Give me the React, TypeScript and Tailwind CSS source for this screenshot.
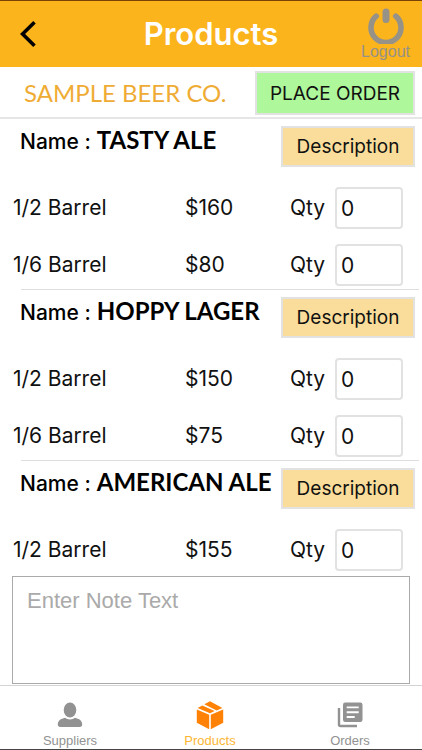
import React, { useState } from "react";

interface Size {
  id: string;
  label: string;
  price: number;
}

interface Product {
  id: string;
  name: string;
  sizes: Size[];
}

const products: Product[] = [
  {
    id: "tasty-ale",
    name: "TASTY ALE",
    sizes: [
      { id: "half", label: "1/2 Barrel", price: 160 },
      { id: "sixth", label: "1/6 Barrel", price: 80 }
    ]
  },
  {
    id: "hoppy-lager",
    name: "HOPPY LAGER",
    sizes: [
      { id: "half", label: "1/2 Barrel", price: 150 },
      { id: "sixth", label: "1/6 Barrel", price: 75 }
    ]
  },
  {
    id: "american-ale",
    name: "AMERICAN ALE",
    sizes: [{ id: "half", label: "1/2 Barrel", price: 155 }]
  }
];

function BackIcon() {
  return (
    <svg viewBox="0 0 16 26" className="w-4 h-[26px]" fill="none" stroke="currentColor" strokeWidth="3.6">
      <path d="M14.5 1.3 2.6 13l11.9 11.7" />
    </svg>
  );
}

function PowerIcon() {
  return (
    <svg viewBox="0 0 36 36" className="size-9" fill="none" stroke="currentColor" strokeLinecap="round">
      <path d="M8.200 8.200a15 15 0 1 0 19.600 0" strokeWidth="5.600" />
      <path d="M18 4v7.600" strokeWidth="7" />
    </svg>
  );
}

function PersonIcon() {
  return (
    <svg viewBox="0 0 26 26" className="size-[26px]" fill="currentColor">
      <ellipse cx="13" cy="8" rx="6.3" ry="7.4" />
      <path d="M.8 22.5c0-3.6 2.8-5.8 7.4-6.7 1.3 1 3 1.6 4.8 1.6s3.5-.6 4.8-1.6c4.6.9 7.4 3.1 7.4 6.7 0 1.5-.9 2.5-2.4 2.5H3.2C1.7 25 .8 24 .8 22.5z" />
    </svg>
  );
}

function BoxIcon() {
  return (
    <svg viewBox="0 0 28 30" className="w-7 h-[30px]" fill="#ff8206">
      <path d="M.8 9.6 13.2 14.8v14.4L.8 22.8z" />
      <path d="M27.2 9.6 14.8 14.8v14.4l12.4-6.4z" />
      <path d="M1.6 7.9 6.3 5.4l12.3 5.7-4.6 2.2z" />
      <path d="M8.3 4.3 14 1.2l12.4 6.7-5.8 2.5z" />
    </svg>
  );
}

function OrdersIcon() {
  return (
    <svg viewBox="0 0 26 26" className="size-[26px]">
      <path d="M2 6v16.500a1.500 1.500 0 0 0 1.500 1.500H20" fill="none" stroke="currentColor" strokeWidth="2.4" />
      <rect x="6" y="0.5" width="19.5" height="19.5" rx="2.2" fill="currentColor" />
      <path d="M9.700 5.400h12M9.700 10.200h12M9.700 15h8" stroke="#fff" strokeWidth="1.9" />
    </svg>
  );
}

const tabs = [
  { id: "suppliers", label: "Suppliers", icon: PersonIcon },
  { id: "products", label: "Products", icon: BoxIcon },
  { id: "orders", label: "Orders", icon: OrdersIcon }
];

export default function App() {
  const [activeTab, setActiveTab] = useState("products");
  const [quantities, setQuantities] = useState<Record<string, string>>({});
  const [note, setNote] = useState("");

  return (
    <div className="flex h-screen flex-col border-b border-[#444] bg-white font-['Inter',sans-serif] text-[#111]">
      {/* Header */}
      <header className="grid h-[67px] shrink-0 grid-cols-[1fr_auto_1fr] items-center border-t border-[#7a4306] bg-[#fcb41d]">
        <button aria-label="Back" className="justify-self-start pl-5 text-black">
          <BackIcon />
        </button>
        <h1 className="text-[31px] font-semibold text-white">Products</h1>
        <button className="flex flex-col items-center justify-self-end pr-3 text-[#969287]">
          <PowerIcon />
          <span className="font-['Liberation_Sans',sans-serif] text-[16px] leading-4">Logout</span>
        </button>
      </header>

      {/* Supplier bar */}
      <div className="flex h-[52px] shrink-0 items-center justify-between border-b-2 border-[#e6e6e6] pt-[2px] pr-[7px] pl-6">
        <h2 className="font-['Lato',sans-serif] text-[24px] text-[#efac35]">SAMPLE BEER CO.</h2>
        <button className="h-11 w-40 border-2 border-[#e2e2e2] bg-[#aff79b] pt-[2px] text-[19px] whitespace-nowrap">
          PLACE ORDER
        </button>
      </div>

      {/* Product list */}
      <main className="min-h-0 flex-1 overflow-y-auto [scrollbar-width:none]">
        {products.map((product) => (
          <section key={product.id} className="pt-[7px]">
            <div className="flex h-[41px] justify-between pr-[7px] pl-5">
              <h3 className="flex items-baseline gap-[6px] leading-7 whitespace-nowrap text-black">
                <span className="text-[21px] font-medium">Name :</span>
                <span className="font-['Lato',sans-serif] text-[24px] font-bold">{product.name}</span>
              </h3>
              <button className="h-[41px] w-[134px] shrink-0 border-2 border-[#e2e2e2] bg-[#fadd9a] pt-[2px] text-[19px]">
                Description
              </button>
            </div>

            <div className="flex flex-col gap-[15px] pt-5 pr-[19px] pb-[3px] pl-[13px]">
              {product.sizes.map((size) => {
                const key = `${product.id}-${size.id}`;
                return (
                  <div key={key} className="flex h-[42px] items-center text-[21px]">
                    <span className="w-[172px]">{size.label}</span>
                    <span className="flex-1">${size.price}</span>
                    <label htmlFor={key} className="w-[45px]">Qty</label>
                    <input
                      id={key}
                      inputMode="numeric"
                      value={quantities[key] ?? "0"}
                      onChange={(e) => setQuantities({ ...quantities, [key]: e.target.value })}
                      className="h-[42px] w-[68px] rounded-sm border-2 border-[#e2e2e2] px-1"
                    />
                  </div>
                );
              })}
            </div>
            <div className="mr-[3px] ml-[21px] h-px bg-[#dedede]"></div>
          </section>
        ))}
      </main>

      {/* Order note */}
      <div className="shrink-0 px-3 pt-[5px]">
        <textarea
          aria-label="Order note"
          placeholder="Enter Note Text"
          value={note}
          onChange={(e) => setNote(e.target.value)}
          className="block h-[108px] w-full resize-none border border-[#aaa] px-[14px] py-2 font-['Liberation_Sans',sans-serif] text-[22px] leading-8 placeholder:text-[#aaa]"
        />
      </div>

      {/* Bottom tabs */}
      <nav className="mt-px grid h-16 shrink-0 grid-cols-3 border-t border-[#d4d4d4] pr-[2px]">
        {tabs.map((tab) => {
          const Icon = tab.icon;
          const isActive = activeTab === tab.id;
          return (
            <button
              key={tab.id}
              onClick={() => setActiveTab(tab.id)}
              className={`flex flex-col items-center justify-end font-['Liberation_Sans',sans-serif] text-[13px] leading-4 ${
                isActive ? "text-[#fcb632]" : "text-[#929292]"
              }`}
            >
              <span className="flex h-9 items-center">
                <Icon />
              </span>
              {tab.label}
            </button>
          );
        })}
      </nav>
    </div>
  );
}
